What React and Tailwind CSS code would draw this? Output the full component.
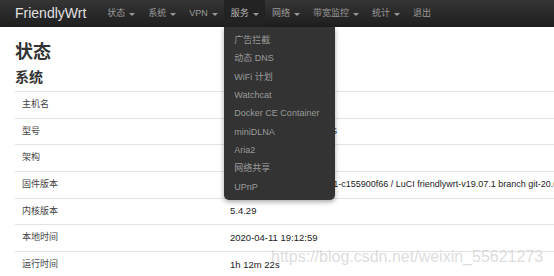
import React from "react";

const navItems = [
  { label: "状态", caret: true },
  { label: "系统", caret: true },
  { label: "VPN", caret: true },
  { label: "服务", caret: true, active: true },
  { label: "网络", caret: true },
  { label: "带宽监控", caret: true },
  { label: "统计", caret: true },
  { label: "退出", caret: false },
];

const services = [
  "广告拦截",
  "动态 DNS",
  "WiFi 计划",
  "Watchcat",
  "Docker CE Container",
  "miniDLNA",
  "Aria2",
  "网络共享",
  "UPnP",
];

const rows = [
  ["主机名", "FriendlyWrt"],
  ["型号", "FriendlyElec NanoPi R2S"],
  ["架构", "ARMv8 Processor rev 4"],
  ["固件版本", "FriendlyWrt 19.07.1 r10911-c155900f66 / LuCI friendlywrt-v19.07.1 branch git-20.029.43316-f7ee1c7", true],
  ["内核版本", "5.4.29"],
  ["本地时间", "2020-04-11 19:12:59"],
  ["运行时间", "1h 12m 22s"],
];

const App = () => {
  return (
    <div className="relative w-[554px] h-[276px] overflow-hidden bg-white font-['Liberation_Sans','Noto_Sans_CJK_SC',sans-serif]">
      {/* top navbar */}
      <header className="relative z-10 h-[27px] flex items-stretch bg-linear-to-b from-[#353535] to-[#1e1e1e]">
        <div className="pl-[15px] flex items-center text-[14px] text-[#e0e0e0] whitespace-nowrap">
          FriendlyWrt
        </div>
        <nav className="ml-[14.5px] flex">
          {navItems.map((item) => (
            <div
              key={item.label}
              className={
                "relative flex items-center px-[6.5px] text-[9px] whitespace-nowrap " +
                (item.active ? "bg-[#222] text-[#b5b5b5]" : "text-[#999]")
              }
            >
              <span>{item.label}</span>
              {item.caret && (
                <span className="ml-[4px] mt-[1px] inline-block w-0 h-0 border-t-[3px] border-x-[3px] border-x-transparent border-t-[#999]" />
              )}
              {/* dropdown */}
              {item.active && (
                <div className="absolute left-0 top-full w-[111px] py-[4px] bg-[#333] rounded-b-[5px] shadow-[0_2px_5px_rgba(0,0,0,0.35)]">
                  {services.map((s) => (
                    <div
                      key={s}
                      className="h-[18.33px] leading-[18.33px] pl-[10px] text-[9px] text-[#9a9a9a] whitespace-nowrap"
                    >
                      {s}
                    </div>
                  ))}
                </div>
              )}
            </div>
          ))}
        </nav>
      </header>

      {/* page content */}
      <main className="pl-[15px] text-[#333]">
        <h1 className="mt-[14px] text-[18px] leading-[22px] font-bold">状态</h1>
        <h2 className="mt-[5px] text-[14px] leading-[18px] font-bold">系统</h2>
        <div className="mt-[5px]">
          {rows.map(([k, v, small]) => (
            <div
              key={k}
              className="h-[26.67px] flex items-center border-t border-[#e2e2e2]"
            >
              <div className="w-[215px] shrink-0 pl-[7px] text-[9px] text-[#444]">{k}</div>
              <div className={(small ? "text-[9px]" : "text-[9.5px]") + " text-[#222] whitespace-nowrap"}>{v}</div>
            </div>
          ))}
        </div>
      </main>

      {/* watermark */}
      <div className="absolute left-[271px] top-[245px] text-[16px] text-[#d4d4d4]/80 whitespace-nowrap">
        https://blog.csdn.net/weixin_55621273
      </div>
    </div>
  );
};

export default App;
